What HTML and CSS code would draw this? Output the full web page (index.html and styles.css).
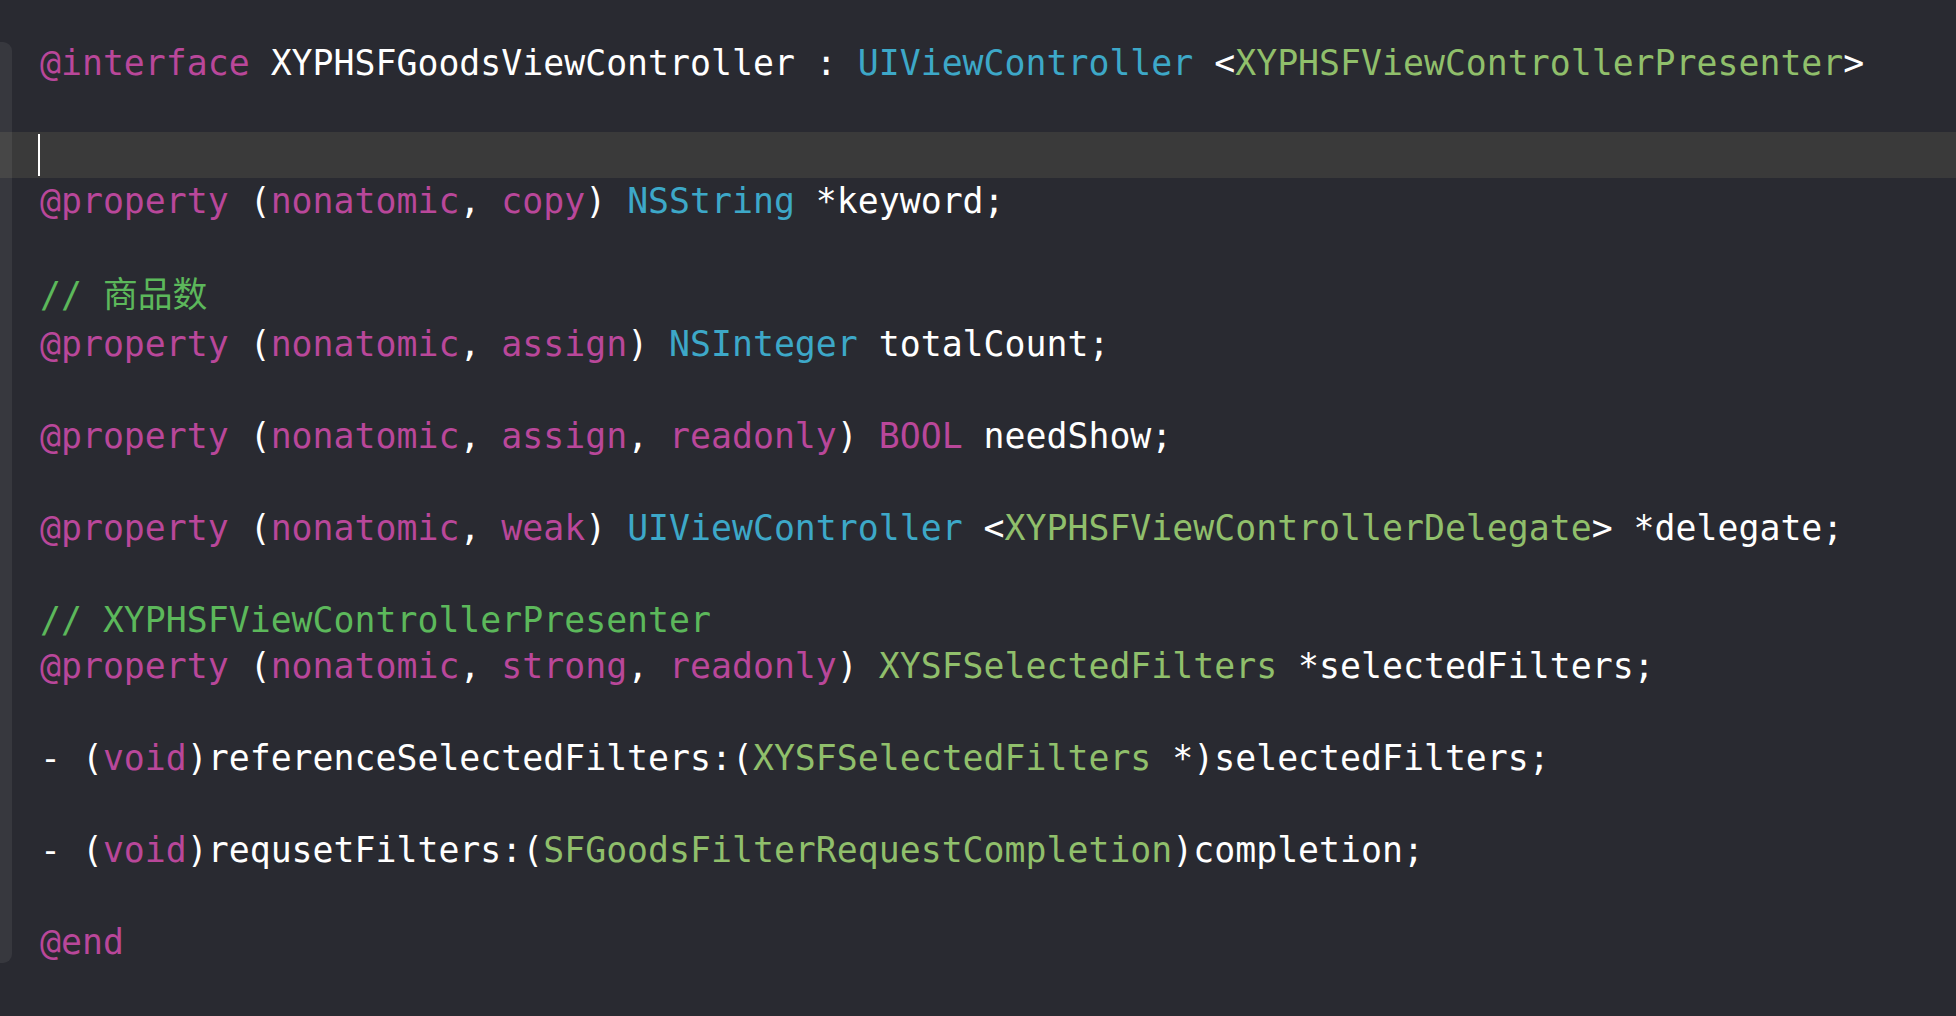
FILE: index.html
```html
<!DOCTYPE html>
<html lang="en">
<head>
<meta charset="utf-8">
<title>XYPHSFGoodsViewController.h</title>
<link rel="stylesheet" href="styles.css">
</head>
<body>
<div class="editor">
  <div class="gutter"></div>
  <div class="line"><span class="kw">@interface</span> XYPHSFGoodsViewController : <span class="sys">UIViewController</span> &lt;<span class="proj">XYPHSFViewControllerPresenter</span>&gt;</div>
  <div class="line"></div>
  <div class="line current"><span class="cursor"></span></div>
  <div class="line"><span class="kw">@property</span> (<span class="kw">nonatomic</span>, <span class="kw">copy</span>) <span class="sys">NSString</span> *keyword;</div>
  <div class="line"></div>
  <div class="line cjk"><span class="cm">// 商品数</span></div>
  <div class="line"><span class="kw">@property</span> (<span class="kw">nonatomic</span>, <span class="kw">assign</span>) <span class="sys">NSInteger</span> totalCount;</div>
  <div class="line"></div>
  <div class="line"><span class="kw">@property</span> (<span class="kw">nonatomic</span>, <span class="kw">assign</span>, <span class="kw">readonly</span>) <span class="kw">BOOL</span> needShow;</div>
  <div class="line"></div>
  <div class="line"><span class="kw">@property</span> (<span class="kw">nonatomic</span>, <span class="kw">weak</span>) <span class="sys">UIViewController</span> &lt;<span class="proj">XYPHSFViewControllerDelegate</span>&gt; *delegate;</div>
  <div class="line"></div>
  <div class="line"><span class="cm">// XYPHSFViewControllerPresenter</span></div>
  <div class="line"><span class="kw">@property</span> (<span class="kw">nonatomic</span>, <span class="kw">strong</span>, <span class="kw">readonly</span>) <span class="proj">XYSFSelectedFilters</span> *selectedFilters;</div>
  <div class="line"></div>
  <div class="line">- (<span class="kw">void</span>)referenceSelectedFilters:(<span class="proj">XYSFSelectedFilters</span> *)selectedFilters;</div>
  <div class="line"></div>
  <div class="line">- (<span class="kw">void</span>)requsetFilters:(<span class="proj">SFGoodsFilterRequestCompletion</span>)completion;</div>
  <div class="line"></div>
  <div class="line"><span class="kw">@end</span></div>
</div>
</body>
</html>
```
FILE: styles.css
```css
html, body {
  margin: 0;
  padding: 0;
  background: #292a31;
}

body {
  width: 1956px;
  height: 1016px;
  overflow: hidden;
}

.editor {
  position: relative;
  padding-top: 40px;
  font-family: "DejaVu Sans Mono", "Noto Sans CJK SC", monospace;
  font-size: 34.85px;
  color: #ffffff;
}

.gutter {
  position: absolute;
  left: 0;
  top: 42px;
  width: 12px;
  height: 921px;
  background: rgba(255, 255, 255, 0.068);
  border-radius: 0 9px 9px 0;
  z-index: 1;
}

.line {
  box-sizing: border-box;
  height: 46px;
  line-height: 46px;
  padding-left: 40px;
  white-space: pre;
}

.line.cjk {
  height: 51px;
  padding-top: 2px;
}

.line.current {
  background: #3a3a3a;
}

.cursor {
  display: inline-block;
  width: 2px;
  height: 42px;
  margin-left: -2px;
  margin-top: 2px;
  vertical-align: top;
  background: #ffffff;
}

.kw {
  color: #b9479a;
}

.sys {
  color: #3da8c8;
}

.proj {
  color: #90bf6b;
}

.cm {
  color: #5cb85b;
}
```
